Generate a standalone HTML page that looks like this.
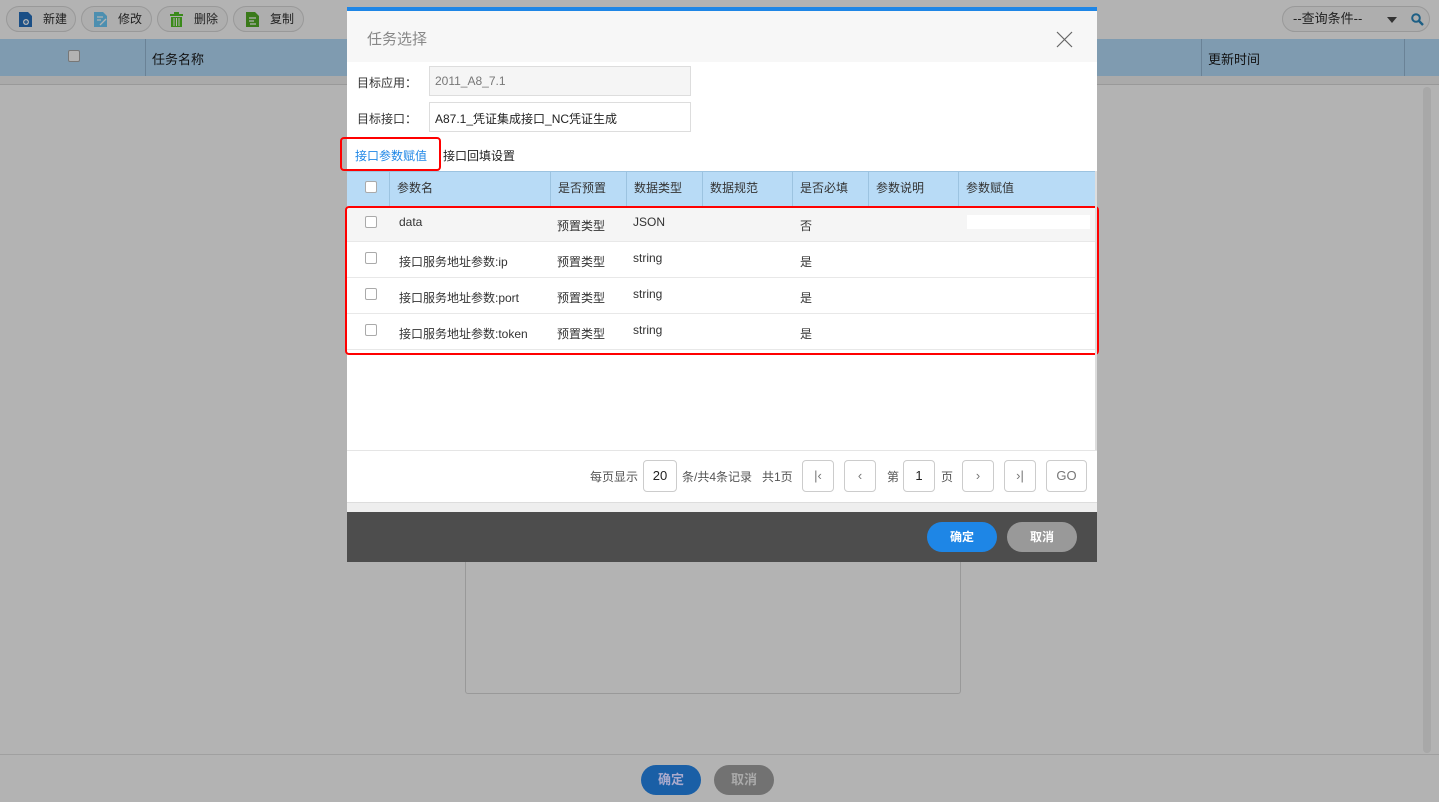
<!DOCTYPE html>
<html><head><meta charset="utf-8"><style>
*{box-sizing:border-box;margin:0;padding:0}
body{width:1439px;height:802px;background:#b3b3b3;font-family:"Liberation Sans","Noto Sans CJK SC",sans-serif;font-size:12px;color:#333;position:relative;overflow:hidden}
.a{position:absolute}
.tb{position:absolute;top:6px;height:26px;border:1px solid #999;border-radius:13px;background:#aeaeae;color:#222;font-size:12px;line-height:24px;padding-left:36px}
.ic{position:absolute;left:12px;top:5px;width:13px;height:15px}
.cb{position:absolute;width:12px;height:12px;border:1px solid #aaa;border-radius:2px;background:#fff}
.th{position:absolute;top:171px;height:35px;line-height:35px;padding-left:7px;border-right:1px solid #9cc3e0;color:#333}
.row{position:absolute;left:347px;width:748px;height:36px;border-bottom:1px solid #e8e8e8}
.row span{position:absolute;top:9px}
.pb{position:absolute;top:460px;height:32px;border:1px solid #ccc;border-radius:4px;background:#fff;text-align:center;line-height:30px;color:#777;font-size:13px}
</style></head><body>
<!-- background page -->
<div class="tb" style="left:6px;width:70px"><svg class="ic" viewBox="0 0 13 15"><path d="M0 0h9l4 4v11H0z" fill="#1b4f86"/><circle cx="7" cy="10" r="3" fill="#b3b3b3"/><path d="M7 8v4M5 10h4" stroke="#1b4f86" stroke-width="1.2"/></svg>新建</div>
<div class="tb" style="left:81px;width:71px"><svg class="ic" viewBox="0 0 13 15"><path d="M0 0h9l4 4v11H0z" fill="#4d8fb0"/><path d="M3 5h6M3 8h4M6 13l6-6" stroke="#b3b3b3" stroke-width="1.3"/></svg>修改</div>
<div class="tb" style="left:157px;width:71px"><svg class="ic" viewBox="0 0 13 15"><path d="M0 2h13v2H0zM4 0h5v2H4zM1 5h11v10H1z" fill="#3a8a1a"/><path d="M4 6v8M6.5 6v8M9 6v8" stroke="#b3b3b3"/></svg>删除</div>
<div class="tb" style="left:233px;width:71px"><svg class="ic" viewBox="0 0 13 15"><path d="M0 0h9l4 4v11H0z" fill="#3a7a1a"/><path d="M3 6h7M3 9h5M4 12h6" stroke="#b3b3b3" stroke-width="1.3"/></svg>复制</div>
<div class="tb" style="left:1282px;width:148px;padding-left:10px;font-size:13px">--查询条件--<span class="a" style="left:104px;top:10px;border:5px solid transparent;border-top:6px solid #333;border-bottom:0"></span><svg class="a" style="left:128px;top:6px" width="13" height="13" viewBox="0 0 13 13"><circle cx="5" cy="5" r="3.8" fill="none" stroke="#1d5f85" stroke-width="2"/><path d="M8 8l4 4" stroke="#1d5f85" stroke-width="2.4"/></svg></div>
<div class="a" style="left:0;top:39px;width:1439px;height:37px;background:#7f9bb0"></div>
<div class="a" style="left:145px;top:39px;width:1px;height:37px;background:#6a8296"></div>
<div class="a" style="left:1201px;top:39px;width:1px;height:37px;background:#6a8296"></div>
<div class="a" style="left:1404px;top:39px;width:1px;height:37px;background:#6a8296"></div>
<div class="cb" style="left:68px;top:50px;background:#b3b3b3;border-color:#777"></div>
<div class="a" style="left:152px;top:49px;color:#111;font-size:13px">任务名称</div>
<div class="a" style="left:1208px;top:49px;color:#111;font-size:13px">更新时间</div>
<div class="a" style="left:0;top:76px;width:1439px;height:9px;background:#aaa;border-bottom:1px solid #999"></div>
<div class="a" style="left:1423px;top:87px;width:8px;height:666px;background:#a8a8a8;border-radius:4px"></div>
<div class="a" style="left:465px;top:540px;width:496px;height:154px;border:1px solid #999;border-radius:3px"></div>
<div class="a" style="left:0;top:754px;width:1439px;height:1px;background:#a0a0a0"></div>
<div class="a" style="left:641px;top:765px;width:60px;height:30px;border-radius:15px;background:#1a5fa6;color:#aac;font-weight:bold;text-align:center;line-height:30px;font-size:13px">确定</div>
<div class="a" style="left:714px;top:765px;width:60px;height:30px;border-radius:15px;background:#727272;color:#aaa;font-weight:bold;text-align:center;line-height:30px;font-size:13px">取消</div>
<!-- modal -->
<div class="a" style="left:347px;top:7px;width:750px;height:4px;background:#1e86e6"></div>
<div class="a" style="left:347px;top:11px;width:750px;height:51px;background:#f7f7f7"></div>
<div class="a" style="left:367px;top:28px;font-size:15px;color:#888">任务选择</div>
<svg class="a" style="left:1056px;top:31px" width="17" height="17"><path d="M1 1l15 15M16 1L1 16" stroke="#666" stroke-width="1.2"/></svg>
<div class="a" style="left:347px;top:62px;width:750px;height:440px;background:#fff"></div>
<div class="a" style="left:357px;top:74px">目标应用：</div>
<div class="a" style="left:429px;top:66px;width:262px;height:30px;border:1px solid #ddd;background:#f5f5f5;padding:7px 5px;color:#777">2011_A8_7.1</div>
<div class="a" style="left:357px;top:110px">目标接口：</div>
<div class="a" style="left:429px;top:102px;width:262px;height:30px;border:1px solid #ddd;background:#fff;padding:7px 5px;color:#222">A87.1_凭证集成接口_NC凭证生成</div>
<div class="a" style="left:340px;top:137px;width:101px;height:34px;border:2px solid #f00;border-radius:4px"></div>
<div class="a" style="left:355px;top:147px;color:#1e86e6">接口参数赋值</div>
<div class="a" style="left:443px;top:147px;color:#222">接口回填设置</div>
<div class="a" style="left:347px;top:171px;width:748px;height:35px;background:#b8dbf6;border-top:1px solid #9cc3e0"></div>
<div class="th" style="left:347px;width:43px"></div>
<div class="cb" style="left:365px;top:181px"></div>
<div class="th" style="left:390px;width:161px">参数名</div>
<div class="th" style="left:551px;width:76px">是否预置</div>
<div class="th" style="left:627px;width:76px">数据类型</div>
<div class="th" style="left:703px;width:90px">数据规范</div>
<div class="th" style="left:793px;width:76px">是否必填</div>
<div class="th" style="left:869px;width:90px">参数说明</div>
<div class="th" style="left:959px;width:137px">参数赋值</div>
<div class="row" style="top:206px;background:#f5f5f5"><span class="cb" style="left:18px;top:10px"></span><span style="left:52px;top:9px">data</span><span style="left:210px;top:11px">预置类型</span><span style="left:286px">JSON</span><span style="left:453px;top:11px">否</span><span style="left:620px;top:9px;width:123px;height:14px;background:#fff"></span></div>
<div class="row" style="top:242px"><span class="cb" style="left:18px;top:10px"></span><span style="left:52px;top:11px">接口服务地址参数:ip</span><span style="left:210px;top:11px">预置类型</span><span style="left:286px">string</span><span style="left:453px;top:11px">是</span></div>
<div class="row" style="top:278px"><span class="cb" style="left:18px;top:10px"></span><span style="left:52px;top:11px">接口服务地址参数:port</span><span style="left:210px;top:11px">预置类型</span><span style="left:286px">string</span><span style="left:453px;top:11px">是</span></div>
<div class="row" style="top:314px"><span class="cb" style="left:18px;top:10px"></span><span style="left:52px;top:11px">接口服务地址参数:token</span><span style="left:210px;top:11px">预置类型</span><span style="left:286px">string</span><span style="left:453px;top:11px">是</span></div>
<div class="a" style="left:345px;top:206px;width:754px;height:149px;border:2px solid #f00;border-radius:4px"></div>
<div class="a" style="left:1095px;top:171px;width:2px;height:279px;background:#ddd"></div>
<div class="a" style="left:347px;top:450px;width:750px;height:1px;background:#e5e5e5"></div>
<div class="a" style="left:590px;top:468px;color:#555">每页显示</div>
<div class="pb" style="left:643px;width:34px;color:#222">20</div>
<div class="a" style="left:682px;top:468px;color:#555">条/共4条记录 &nbsp;&nbsp;共1页</div>
<div class="pb" style="left:802px;width:32px">|‹</div>
<div class="pb" style="left:844px;width:32px">‹</div>
<div class="a" style="left:887px;top:468px;color:#555">第</div>
<div class="pb" style="left:903px;width:32px;color:#222">1</div>
<div class="a" style="left:941px;top:468px;color:#555">页</div>
<div class="pb" style="left:962px;width:32px">›</div>
<div class="pb" style="left:1004px;width:32px">›|</div>
<div class="pb" style="left:1046px;width:41px">GO</div>
<div class="a" style="left:347px;top:502px;width:750px;height:10px;background:#eee;border-top:1px solid #ddd"></div>
<div class="a" style="left:347px;top:512px;width:750px;height:50px;background:#4d4d4d"></div>
<div class="a" style="left:927px;top:522px;width:70px;height:30px;border-radius:15px;background:#1e86e6;color:#fff;font-weight:bold;text-align:center;line-height:30px">确定</div>
<div class="a" style="left:1007px;top:522px;width:70px;height:30px;border-radius:15px;background:#999;color:#fff;font-weight:bold;text-align:center;line-height:30px">取消</div>
</body></html>
